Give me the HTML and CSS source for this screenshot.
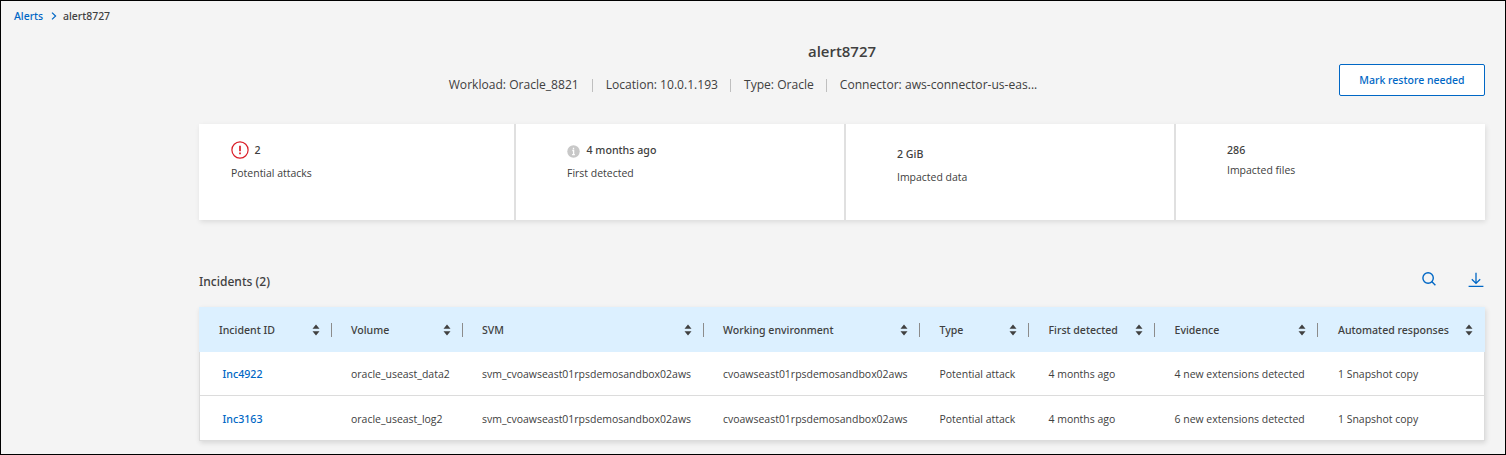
FILE: index.html
```html
<!DOCTYPE html>
<html lang="en">
<head>
<meta charset="utf-8">
<title>alert8727</title>
<link rel="stylesheet" href="styles.css">
</head>
<body>
<svg class="defs" width="0" height="0">
  <symbol id="sort" viewBox="0 0 8 12"><path d="M4 .6 7.5 4.8H.5ZM.5 7.2h7L4 11.4Z" fill="#404040"/></symbol>
</svg>
<div class="page">
  <nav class="breadcrumb">
    <a class="crumb-link">Alerts</a>
    <svg class="chevron" width="6" height="8" viewBox="0 0 6 8"><path d="M1 .6 4.6 4 1 7.4" fill="none" stroke="#0067c5" stroke-width="1.2"/></svg>
    <span>alert8727</span>
  </nav>

  <main class="content">
    <header class="heading">
      <h1 class="title">alert8727</h1>
      <div class="meta">
        <span class="meta-item">Workload: Oracle_8821</span>
        <span class="meta-item">Location: 10.0.1.193</span>
        <span class="meta-item">Type: Oracle</span>
        <span class="meta-item">Connector: aws-connector-us-eas...</span>
      </div>
      <button class="restore">Mark restore needed</button>
    </header>

    <section class="cards">
      <div class="card">
        <div class="value value-alert">
          <svg width="18" height="18" viewBox="0 0 18 18"><circle cx="9" cy="9" r="8.1" fill="none" stroke="#da1e28" stroke-width="1.2"/><path d="M9 4.8v5.4M9 11.4v1.8" stroke="#da1e28" stroke-width="1.7"/></svg>
          <span>2</span>
        </div>
        <div class="label">Potential attacks</div>
      </div>
      <div class="card">
        <div class="value value-info">
          <svg width="13" height="13" viewBox="0 0 13 13"><circle cx="6.5" cy="6.5" r="6.2" fill="#c8c8c8"/><path d="M6.5 2.8v1.5M5.3 5.5h1.3v4M5.1 9.6h2.8" stroke="#fff" stroke-width="1.3" fill="none"/></svg>
          <span>4 months ago</span>
        </div>
        <div class="label">First detected</div>
      </div>
      <div class="card card-low">
        <div class="value">2 GiB</div>
        <div class="label">Impacted data</div>
      </div>
      <div class="card card-tight">
        <div class="value">286</div>
        <div class="label">Impacted files</div>
      </div>
    </section>

    <section class="toolbar">
      <h2 class="subtitle">Incidents (2)</h2>
      <div class="tools">
        <svg width="14" height="14" viewBox="0 0 14 14" fill="none" stroke="#0067c5" stroke-width="1.4"><circle cx="6.1" cy="6" r="5.2"/><path d="m9.7 9.6 3.7 3.6"/></svg>
        <svg width="16" height="16" viewBox="0 0 16 16" fill="none" stroke="#0067c5" stroke-width="1.3"><path d="M8 .8v10.6M3.8 7.2 8 11.4l4.2-4.2M.6 14.4h14.8"/></svg>
      </div>
    </section>

    <section class="table">
      <div class="row head">
        <div class="cell"><span>Incident ID</span><svg class="sort"><use href="#sort"/></svg></div>
        <div class="cell"><span>Volume</span><svg class="sort"><use href="#sort"/></svg></div>
        <div class="cell"><span>SVM</span><svg class="sort"><use href="#sort"/></svg></div>
        <div class="cell"><span>Working environment</span><svg class="sort"><use href="#sort"/></svg></div>
        <div class="cell"><span>Type</span><svg class="sort"><use href="#sort"/></svg></div>
        <div class="cell"><span>First detected</span><svg class="sort"><use href="#sort"/></svg></div>
        <div class="cell"><span>Evidence</span><svg class="sort"><use href="#sort"/></svg></div>
        <div class="cell"><span>Automated responses</span><svg class="sort"><use href="#sort"/></svg></div>
      </div>
      <div class="row data">
        <div class="cell id">Inc4922</div>
        <div class="cell">oracle_useast_data2</div>
        <div class="cell">svm_cvoawseast01rpsdemosandbox02aws</div>
        <div class="cell">cvoawseast01rpsdemosandbox02aws</div>
        <div class="cell">Potential attack</div>
        <div class="cell">4 months ago</div>
        <div class="cell">4 new extensions detected</div>
        <div class="cell">1 Snapshot copy</div>
      </div>
      <div class="row data">
        <div class="cell id">Inc3163</div>
        <div class="cell">oracle_useast_log2</div>
        <div class="cell">svm_cvoawseast01rpsdemosandbox02aws</div>
        <div class="cell">cvoawseast01rpsdemosandbox02aws</div>
        <div class="cell">Potential attack</div>
        <div class="cell">4 months ago</div>
        <div class="cell">6 new extensions detected</div>
        <div class="cell">1 Snapshot copy</div>
      </div>
    </section>
  </main>
</div>
</body>
</html>
```
FILE: styles.css
```css
* { box-sizing: border-box; }
body {
  margin: 0;
  font-family: "Open Sans", "Noto Sans", sans-serif;
  font-size: 10.47px;
  line-height: 16px;
  color: #404040;
}
svg { display: block; flex: none; }
.defs { position: absolute; }
.page {
  height: 455px;
  border: 1px solid #000;
  background: #f4f4f4;
  overflow: hidden;
}
.breadcrumb,
.restore,
.value,
.subtitle,
.head,
.data .id {
  font-family: "Noto Sans", "Open Sans", sans-serif;
  font-weight: 500;
}
.breadcrumb {
  display: flex;
  align-items: center;
  height: 16px;
  margin: 7px 0 0 13px;
  font-size: 10.45px;
}
.crumb-link { color: #0067c5; width: 37px; }
.chevron { margin-right: 6px; }
.content { width: 1286px; margin-left: 198px; }

.heading {
  position: relative;
  height: 100px;
  padding-top: 16px;
  text-align: center;
}
.title { margin: 0; font-size: 14.95px; line-height: 22px; font-weight: 600; }
.meta {
  display: flex;
  align-items: center;
  justify-content: center;
  height: 46px;
  padding-right: 198px;
  font-size: 12.08px;
}
.meta-item { display: flex; align-items: center; white-space: nowrap; }
.meta-item + .meta-item::before {
  content: "";
  width: 1px;
  height: 13px;
  margin: 0 13px;
  background: #bfbfbf;
}
.meta-item:nth-child(n+3)::before { margin-left: 12px; }
.restore {
  position: absolute;
  right: 0;
  top: 40px;
  width: 146px;
  height: 32px;
  padding: 0;
  border: 1px solid #0067c5;
  border-radius: 2px;
  background: #fff;
  color: #0067c5;
  font-size: 10.53px;
  line-height: 16px;
}

.cards {
  display: grid;
  grid-template-columns: 317px 330px 330px 309px;
  height: 96px;
  background: #fff;
  box-shadow: 1px 2px 5px rgba(0, 0, 0, .1);
}
.card { padding: 18px 0 0 32px; border-right: 2px solid #e0e0e0; }
.card + .card { padding-left: 51px; }
.card:last-child { border-right: 0; }
.value {
  display: flex;
  align-items: center;
  height: 16px;
  margin-bottom: 7px;
  font-size: 10.64px;
}
.value-alert { gap: 5.5px; }
.value-info { gap: 6.5px; }
.value-info svg { margin-top: 3px; }
.card-low { padding-top: 22px; }
.card-tight .value { margin-bottom: 4px; }

.toolbar {
  display: flex;
  justify-content: space-between;
  align-items: center;
  height: 20px;
  margin: 51px 0 16px;
}
.subtitle { margin: 2px 0 0; font-size: 12.06px; }
.tools { display: flex; gap: 32px; align-items: center; margin: -3px 1px 0 0; }
.tools svg:first-child { margin-top: -2px; }

.table { height: 134px; background: #fff; box-shadow: 1px 2px 5px rgba(0, 0, 0, .12); }
.row {
  display: grid;
  grid-template-columns: 133px 131px 241px 216px 109px 126px 163px 167px;
  align-items: center;
}
.cell { padding-left: 19px; white-space: nowrap; }
.cell:first-child { padding-left: 20px; }
.cell:nth-child(n+5) { padding-left: 19.5px; }
.cell:last-child { padding-left: 20px; }
.head { height: 45px; background: #dcf0ff; font-size: 10.57px; }
.head .cell {
  display: flex;
  justify-content: space-between;
  align-items: center;
  height: 14px;
  padding-right: 11px;
  border-right: 1px solid #8c8c8c;
}
.head .cell:last-child { border-right: 0; padding-right: 12px; }
.sort { width: 8px; height: 12px; }
.data {
  height: 44px;
  border: solid #dcdcdc;
  border-width: 0 1px 1px;
}
.data .cell { margin-left: -1px; }
.data + .data { height: 45px; padding-top: 1px; }
.data .id { padding-left: 23.5px; font-size: 10.65px; color: #0067c5; }
```
